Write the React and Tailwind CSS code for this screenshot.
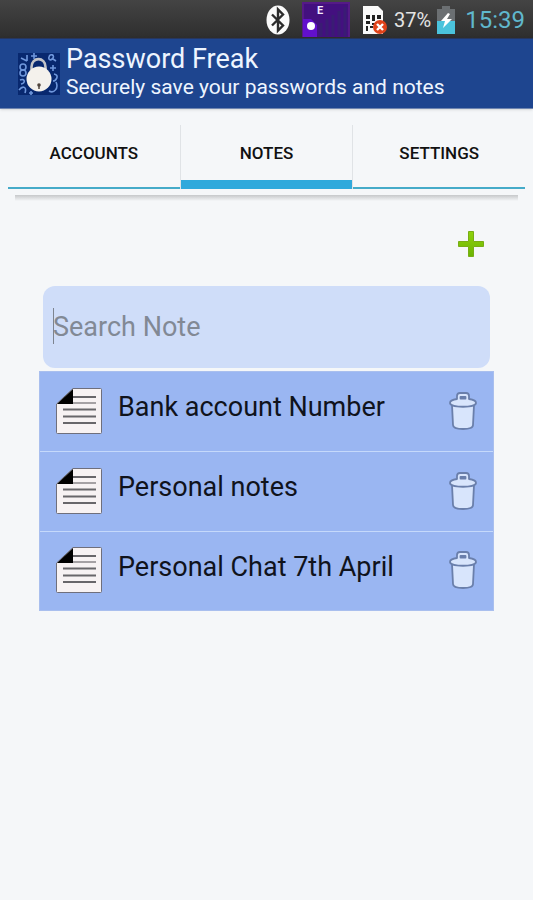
import React, { useState } from 'react';

const NOTES = ['Bank account Number', 'Personal notes', 'Personal Chat 7th April'];
const TABS = ['ACCOUNTS', 'NOTES', 'SETTINGS'];

const BluetoothIcon = () => (
  <svg width="24" height="30" viewBox="0 0 24 30" aria-hidden="true">
    <ellipse cx="12" cy="15" rx="11.5" ry="14.5" fill="#fafafa" />
    <path d="M6 9.5 17 20.5 12 25.5V4.5L17 9.5 6 20.5" fill="none" stroke="#2b2b2b" strokeWidth="2.4" />
  </svg>
);

const SignalIcon = () => (
  <svg width="48" height="36" viewBox="0 0 48 36" aria-hidden="true">
    <rect x="1" y="1" width="46" height="34" fill="#43107f" />
    <path d="M1 35V1H47V35" fill="none" stroke="#551a86" strokeWidth="2" />
    <path d="M19 21V34M25 17V34M31 13V34M37 9V34M43 5V34" stroke="#3a1c74" strokeWidth="3" />
    <path d="M1 17H9L15 23V35H1Z" fill="#6210cc" />
    <circle cx="9" cy="24" r="4" fill="#fff" />
    <text x="15" y="12" fontSize="11" fontWeight="700" fill="#f3eaff">E</text>
  </svg>
);

const SimIcon = () => (
  <svg width="26" height="30" viewBox="0 0 26 30" aria-hidden="true">
    <path d="M1 1H16L21 6V29H1Z" fill="#fafafa" />
    <path d="M4 10H8V14H4ZM10 10H13V16H10ZM15 10H19V14H15ZM4 16H8V19H4ZM4 21H6V26H4ZM8 21H11V23H8ZM10 18H18V20H10Z" fill="#222" />
    <circle cx="18" cy="22" r="7" fill="#e0431a" />
    <path d="M15 19 21 25M21 19 15 25" stroke="#fff" strokeWidth="2.4" />
  </svg>
);

const BatteryIcon = () => (
  <svg width="18" height="28" viewBox="0 0 18 28" aria-hidden="true">
    <path d="M5 0H13V3H18V28H0V3H5Z" fill="#6b6f72" />
    <rect y="15" width="18" height="13" fill="#4bc3dc" />
    <path d="M11 7 4 15H8L6 22 15 13H10L13 8Z" fill="#fff" />
  </svg>
);

const AppLogo = () => (
  <svg width="42" height="42" viewBox="0 0 42 42" aria-hidden="true">
    <rect width="42" height="42" fill="#08286f" />
    <g fill="none" stroke="#6f97dc" strokeWidth="1.6">
      <path d="M3 5 9 8M9 2V8M16 0V6M13 3H19M31 4C32 0 37 2 35 5S30 7 31 4M35 6 38 8" />
      <circle cx="5" cy="14" r="3" />
      <circle cx="5" cy="20" r="3" />
      <path d="M35 12V18M32 15H38M2 27C7 25 8 30 3 31M1 37C5 32 9 34 7 40M36 21C42 22 38 28 35 28M31 38C36 41 41 35 38 29M13 38V42M11 40H15" />
    </g>
    <path d="M13.500 17V14C13.500 3.500 27.500 3.500 27.500 14V17" fill="none" stroke="#c3c4c8" strokeWidth="2.6" />
    <circle cx="21" cy="26" r="12.5" fill="#f4f1ec" />
    <circle cx="21" cy="32" r="1.8" fill="#51453d" />
    <path d="M21 32V36" stroke="#51453d" strokeWidth="1.5" />
  </svg>
);

const PlusIcon = () => (
  <svg width="28" height="28" viewBox="0 0 28 28" aria-hidden="true">
    <defs>
      <linearGradient id="plus" x1="0" y1="0" x2="0" y2="1">
        <stop offset="0" stopColor="#8fd20c" />
        <stop offset="1" stopColor="#6bb404" />
      </linearGradient>
    </defs>
    <path
      d="M11.5 1.5H16.5V11.5H26.5V16.5H16.5V26.5H11.5V16.5H1.5V11.5H11.5Z"
      fill="url(#plus)"
      stroke="#78ad16"
      strokeLinejoin="round"
    />
  </svg>
);

const NoteIcon = () => (
  <svg width="48" height="48" viewBox="0 0 48 48" aria-hidden="true">
    <path d="M18 1.5H45.5Q46.5 1.5 46.5 2.5V45.5Q46.5 46.5 45.5 46.5H2.500Q1.500 46.500 1.500 45.500V17Z" fill="#f7f2f3" stroke="#6f6f7c" />
    <path d="M18 2V17H2Z" fill="#000" />
    <path d="M18 10H41M8 22.5H41M8 29.5H41M8 36H41" stroke="#68666a" strokeWidth="1.8" />
    <path d="M18 16H41" stroke="#a5a1a4" strokeWidth="2" />
  </svg>
);

const TrashIcon = () => (
  <svg width="28" height="38" viewBox="0 0 28 38" aria-hidden="true">
    <g fill="#d8e5fc" stroke="#6a7fab" strokeWidth="1.8" strokeLinejoin="round">
      <path d="M3 13 4 33Q4 37 14 37T24 33L25 13Z" />
      <path d="M8 7V4Q8 1 11 1H17Q20 1 20 4V7C24 7.5 27 9 27 11C27 16 1 16 1 11C1 9 4 7.5 8 7Z" />
      <path d="M11.500 6.500V5H16.500V6.500Z" fill="#6a7fab" />
    </g>
  </svg>
);

const StatusBar = () => (
  <div className="h-[38px] bg-gradient-to-b from-[#444] to-[#2e2e2e] flex items-center justify-end pr-2 pt-[2px]">
    <BluetoothIcon />
    <div className="ml-3"><SignalIcon /></div>
    <div className="ml-3"><SimIcon /></div>
    <span className="ml-[6px] text-xl text-[#e4e4e4]">37%</span>
    <div className="ml-[6px]"><BatteryIcon /></div>
    <span className="ml-[10px] text-2xl text-[#60b8cd]">15:39</span>
  </div>
);

export default function App() {
  const [tab, setTab] = useState('NOTES');
  const [notes, setNotes] = useState(NOTES);
  const [query, setQuery] = useState('');

  const visible = notes.filter(n => n.toLowerCase().includes(query.toLowerCase()));

  return (
    <div className="min-h-screen bg-[#f5f7f9] font-[Roboto,sans-serif] text-[#111]">
      <StatusBar />

      <header className="bg-[#1e458f] border-t border-b border-t-[#26365f] border-b-[#6f85b0] shadow-sm flex items-center pl-[18px] gap-[6px] h-[71px]">
        <AppLogo />
        <div className="text-[#eef5ff] pb-[6px]">
          <h1 className="text-[27px] leading-8">Password Freak</h1>
          <p className="text-[21px] leading-6">Securely save your passwords and notes</p>
        </div>
      </header>

      <nav className="mt-4 mx-2 flex">
        {TABS.map(t => (
          <button
            key={t}
            onClick={() => setTab(t)}
            className={`flex-1 h-16 pb-[6px] flex items-center justify-center text-[17px] font-medium border-l first:border-l-0 border-l-[#e0e3e6] ${
              tab === t ? 'shadow-[inset_0_-9px_0_#2fa9dc]' : 'shadow-[inset_0_-2px_0_#45abc9]'
            }`}
          >
            {t}
          </button>
        ))}
      </nav>
      <div className="mt-[6px] mx-[15px] h-[6px] bg-gradient-to-b from-[#c6c8ca] to-[#f5f7f9]" />

      <main>
        <div className="flex justify-end mt-[29px] pr-12">
          <button aria-label="Add note"><PlusIcon /></button>
        </div>

        <div className="relative mt-7 mx-[43px]">
          <input
            type="text"
            aria-label="Search Note"
            placeholder="Search Note"
            value={query}
            onChange={e => setQuery(e.target.value)}
            className="block w-full h-[82px] rounded-xl bg-[#cfddf9] px-[10px] text-[27px] placeholder:text-[#828995] focus:outline-none"
          />
          {!query && <span className="absolute left-[10px] top-[22px] h-9 w-px bg-[#7d8490]" />}
        </div>

        <ul className="mt-[3px] mx-[39px] border border-[#a9bfee] bg-[#9ab6f2]">
          {visible.map(note => (
            <li key={note} className="h-20 pl-[15px] pr-4 pb-[2px] flex items-center border-b border-b-[#c5d9fb] last:border-b-0 last:h-[78px]">
              <NoteIcon />
              <span className="flex-1 pl-[15px] pb-[6px] text-[27px] text-[#10131c]">{note}</span>
              <button aria-label={`Delete ${note}`} onClick={() => setNotes(notes.filter(n => n !== note))}>
                <TrashIcon />
              </button>
            </li>
          ))}
        </ul>
      </main>
    </div>
  );
}
